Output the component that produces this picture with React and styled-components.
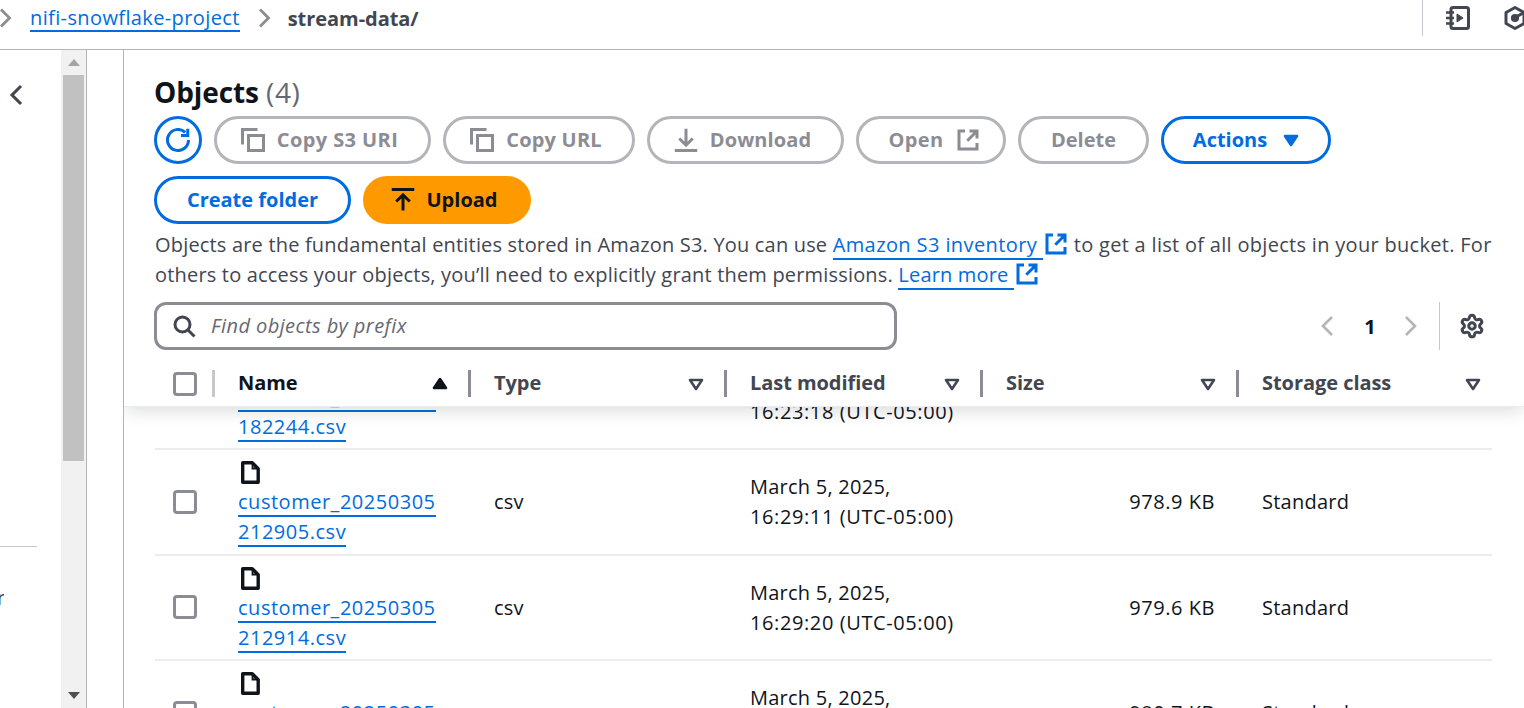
import React from "react";
import styled, { createGlobalStyle } from "styled-components";
import { Settings } from "lucide-react";

const GlobalStyle = createGlobalStyle`
  html, body {
    margin: 0;
    padding: 0;
    background: #fff;
    overflow: hidden;
  }
  * {
    box-sizing: border-box;
  }
  body {
    font-family: "Open Sans", "Noto Sans", "Liberation Sans", sans-serif;
    font-size: 20px;
    letter-spacing: 0.25px;
    color: #0f141a;
  }
`;

const Page = styled.div`
  width: 1524px;
  height: 708px;
  display: flex;
  flex-direction: column;
  overflow: hidden;
`;

const TopBar = styled.header`
  height: 50px;
  flex: none;
  display: flex;
  align-items: flex-start;
  border-bottom: 1px solid #b4b4bb;
`;

const Crumbs = styled.nav`
  flex: 1;
  height: 36px;
  display: flex;
  align-items: center;
  color: #8c8c94;
`;

const Crumb = styled.a`
  color: #006ce0;
  border-bottom: 2px solid #006ce0;
  line-height: 25px;
  letter-spacing: 0.38px;
  margin: 0 18px 0 16px;
`;

const CurrentCrumb = styled.span`
  color: #424650;
  font-weight: 700;
  letter-spacing: -0.05px;
  margin-left: 16px;
`;

const TopTools = styled.div`
  width: 102px;
  height: 36px;
  border-left: 1px solid #c6c6cd;
  display: flex;
  align-items: center;
  gap: 33px;
  padding-left: 23px;
  color: #424650;
  overflow: hidden;
`;

const Body = styled.div`
  flex: 1;
  min-height: 0;
  display: flex;
`;

const SideNav = styled.aside`
  width: 61px;
  flex: none;
  color: #424650;
  padding: 33px 0 0 9px;

  svg {
    display: block;
  }
`;

const SideRule = styled.div`
  height: 1px;
  width: 37px;
  margin: 439px 0 0 -9px;
  background: #c6c6cd;
`;

const SideStub = styled.div`
  margin: 37px 0 0 -9px;
  width: 4px;
  line-height: 27px;
  text-indent: -3px;
  color: #424650;
  overflow: hidden;
`;

const ScrollTrack = styled.div`
  width: 26px;
  flex: none;
  background: #f1f1f1;
  border-right: 1px solid #b4b4bb;
  display: flex;
  flex-direction: column;
  align-items: center;
`;

const ScrollArrow = styled.div`
  height: 25px;
  width: 100%;
  flex: none;
  display: flex;
  align-items: center;
  justify-content: center;
  color: ${(p) => (p.$muted ? "#a3a3a3" : "#505050")};
`;

const ScrollThumb = styled.div`
  width: 21px;
  height: 386px;
  flex: none;
  background: #c1c1c1;
`;

const ScrollSpace = styled.div`
  flex: 1;
`;

const Gutter = styled.div`
  width: 37px;
  flex: none;
  border-right: 1px solid #b4b4bb;
`;

const Main = styled.main`
  flex: 1;
  min-width: 0;
  display: flex;
  flex-direction: column;
`;

const Head = styled.section`
  flex: none;
  padding: 24px 39px 11px 30px;
`;

const Title = styled.h1`
  margin: 0 0 6px 0;
  font-size: 28px;
  line-height: 36px;
  font-weight: 700;
  letter-spacing: -0.1px;
`;

const Count = styled.span`
  font-weight: 400;
  letter-spacing: 0.6px;
  color: #656871;
`;

const Actions = styled.div`
  display: flex;
  flex-wrap: wrap;
  gap: 12px;
  width: 1200px;
`;

const Button = styled.button`
  height: 48px;
  width: ${(p) => p.$w}px;
  border-radius: 24px;
  border: 3px solid ${(p) => (p.$off ? "#b4b4bb" : p.$primary ? "#ff9900" : "#006ce0")};
  background: ${(p) => (p.$primary ? "#ff9900" : "#fff")};
  color: ${(p) => (p.$off ? "#8c8c94" : p.$primary ? "#0f141a" : "#006ce0")};
  font: 700 20px "Open Sans", sans-serif;
  letter-spacing: ${(p) => p.$ls ?? 0}px;
  padding: 0 ${(p) => p.$padR ?? 0}px 0 ${(p) => p.$padL ?? 0}px;
  display: flex;
  align-items: center;
  justify-content: center;
  gap: ${(p) => p.$gap ?? 12}px;
`;

const ButtonLabel = styled.span`
  margin-top: -2px;
`;

const Description = styled.p`
  margin: 6px -12px 12px 1px;
  font-size: 20px;
  line-height: 30px;
  letter-spacing: 0.18px;
  color: #424650;
`;

const DescriptionTail = styled.span`
  letter-spacing: 0.3px;
`;

const TextLink = styled.a`
  color: #006ce0;
  letter-spacing: ${(p) => p.$ls ?? 0.18}px;
  border-bottom: 2px solid #006ce0;
`;

const LinkIcon = styled.span`
  color: #006ce0;
  display: inline-block;
  vertical-align: -4px;
  margin: 0 6px 0 1px;
  line-height: 0;
`;

const FilterRow = styled.div`
  display: flex;
  align-items: center;
  justify-content: space-between;
  height: 48px;
`;

const Search = styled.div`
  width: 743px;
  height: 48px;
  border: 3px solid #8c8c94;
  border-radius: 12px;
  display: flex;
  align-items: center;
  gap: 15px;
  padding: 0 0 0 15px;
  color: #424650;
`;

const SearchText = styled.span`
  font-style: italic;
  letter-spacing: 0.42px;
  padding-bottom: 2px;
  color: #656871;
`;

const Pager = styled.div`
  display: flex;
  align-items: center;
  color: #b4b4bb;
  height: 48px;
`;

const PageNumber = styled.span`
  color: #0f141a;
  font-weight: 700;
  margin: 0 28px 0 30px;
`;

const PagerRule = styled.div`
  width: 1px;
  height: 48px;
  background: #c6c6cd;
  margin: 0 19px 0 21px;
`;

const GearWrap = styled.div`
  color: #424650;
  line-height: 0;
`;

const TableArea = styled.div`
  flex: 1;
  min-height: 0;
  display: flex;
  flex-direction: column;
  overflow: hidden;
`;

const columns = "58px 256px 256px 256px 256px 1fr";

const HeaderRow = styled.div`
  position: relative;
  z-index: 2;
  height: 46px;
  flex: none;
  background: #fff;
  box-shadow: 0 5px 18px -2px rgba(15, 20, 26, 0.16);
  border-bottom: 1px solid #ebebf0;
  padding: 0 30px;
  display: grid;
  grid-template-columns: ${columns};
  align-items: center;
`;

const HeaderCheck = styled.div`
  padding-left: 19px;
`;

const HeaderCell = styled.div`
  display: flex;
  align-items: center;
  justify-content: space-between;
  height: 27px;
  font-weight: 700;
  letter-spacing: -0.05px;
  color: ${(p) => (p.$active ? "#0f141a" : "#424650")};
  padding: 0 ${(p) => p.$pr ?? 20}px 0 23px;
  border-left: 3px solid ${(p) => (p.$active ? "#c6c6cd" : "#8c8c94")};
`;

const HeaderLabel = styled.span`
  margin-top: -2px;
`;

const Rows = styled.div`
  flex: 1;
  min-height: 0;
  margin: 0 32px 0 30px;
`;

const Row = styled.div`
  display: grid;
  grid-template-columns: ${columns};
  height: 105.5px;
  margin-top: ${(p) => p.$shift ?? 0}px;
  margin-left: 1px;
  border-bottom: 2px solid #ebebf0;
  align-items: center;
  line-height: 30px;
`;

const CheckCell = styled.div`
  padding-left: 18px;
`;

const Check = styled.span`
  display: block;
  width: 24px;
  height: 24px;
  border: 3px solid #8c8c94;
  border-radius: 4px;
  background: #fff;
`;

const NameCell = styled.div`
  align-self: start;
  padding: 11px 0 0 25px;
`;

const FileGlyph = styled.div`
  height: 26px;
  line-height: 0;
  padding-left: 3px;
`;

const FileLink = styled.a`
  color: #006ce0;
  letter-spacing: 0.52px;
  border-bottom: 2px solid #006ce0;
`;

const TextCell = styled.div`
  padding: 1px 0 0 25px;
`;

const TimeText = styled.span`
  letter-spacing: 0.6px;
`;

const SizeCell = styled.div`
  text-align: right;
  letter-spacing: 0.55px;
  padding: 1px 22px 0 0;
`;

const Icon = ({ size = 24, width = 2, children }) => (
  <svg
    width={size}
    height={size}
    viewBox="0 0 16 16"
    fill="none"
    stroke="currentColor"
    strokeWidth={width}
    style={{ flex: "none" }}
  >
    {children}
  </svg>
);

const CopyIcon = () => (
  <Icon>
    <path d="M1 11V1h10" />
    <path d="M5 5h10v10H5z" />
  </Icon>
);

const ExternalIcon = () => (
  <Icon>
    <path d="M6 2H2v12h12v-4" />
    <path d="M9 2h5v5M14 2 7.5 8.5" />
  </Icon>
);

const Caret = ({ up, solid }) => (
  <svg width="16" height="14" viewBox="0 0 16 14" style={{ flex: "none" }}>
    <path
      d={up ? "M8 2 14 11H2z" : "M8 12 2 3h12z"}
      fill={solid ? "currentColor" : "none"}
      stroke="currentColor"
      strokeWidth="2.6"
      strokeLinejoin="round"
    />
  </svg>
);

const FileIcon = () => (
  <svg width="19" height="23" viewBox="0 0 19 23" fill="none" stroke="#0f141a" strokeWidth="3.4">
    <path d="M1.7 1.7h9.5l6 6v13.6H1.7z" strokeLinejoin="round" />
    <path d="M11.5 2v5.5H17" strokeWidth="1.8" />
  </svg>
);

const header = [
  { label: "Name", active: true, up: true },
  { label: "Type" },
  { label: "Last modified" },
  { label: "Size" },
  { label: "Storage class", pr: 13 },
];

const files = [
  { top: "customer_20250305", bottom: "182244.csv", date: "March 5, 2025,", time: "16:23:18 (UTC-05:00)", size: "978.1 KB", shift: -62.5, clipped: true },
  { top: "customer_20250305", bottom: "212905.csv", date: "March 5, 2025,", time: "16:29:11 (UTC-05:00)", size: "978.9 KB" },
  { top: "customer_20250305", bottom: "212914.csv", date: "March 5, 2025,", time: "16:29:20 (UTC-05:00)", size: "979.6 KB" },
  { top: "customer_20250305", bottom: "212923.csv", date: "March 5, 2025,", time: "16:29:29 (UTC-05:00)", size: "980.7 KB" },
];

export default function App() {
  return (
    <Page>
      <GlobalStyle />
      <TopBar>
        <Crumbs>
          <svg width="14" height="22" viewBox="0 0 14 22" fill="none" stroke="currentColor" strokeWidth="2.8">
            <path d="M1 2.5l8.5 8.5L1 19.5" />
          </svg>
          <Crumb>nifi-snowflake-project</Crumb>
          <svg width="14" height="22" viewBox="0 0 14 22" fill="none" stroke="currentColor" strokeWidth="2.8">
            <path d="M2 2.5l8.5 8.5L2 19.5" />
          </svg>
          <CurrentCrumb>stream-data/</CurrentCrumb>
        </Crumbs>
        <TopTools>
          <svg width="24" height="24" viewBox="0 0 24 24" fill="none" stroke="currentColor" strokeWidth="3" style={{ flex: "none" }}>
            <rect x="5" y="1.5" width="17.5" height="21" rx="2" />
            <path d="M0 6.5h8M0 12h8M0 17.5h8" strokeWidth="2.4" />
            <path d="M11 8v8l6-4z" fill="currentColor" strokeWidth="1" />
          </svg>
          <svg width="24" height="24" viewBox="0 0 24 24" fill="none" stroke="currentColor" strokeWidth="3" style={{ flex: "none" }}>
            <path d="M12 1.5 21 6.5v11l-9 5-9-5v-11z" strokeLinejoin="round" />
            <circle cx="12" cy="12" r="2.6" fill="currentColor" />
            <path d="M13 11l9-5" />
          </svg>
        </TopTools>
      </TopBar>
      <Body>
        <SideNav>
          <svg width="14" height="24" viewBox="0 0 14 24" fill="none" stroke="currentColor" strokeWidth="3">
            <path d="M12 3 3 12l9 9" />
          </svg>
          <SideRule />
          <SideStub>r</SideStub>
        </SideNav>
        <ScrollTrack>
          <ScrollArrow $muted>
            <svg width="12" height="7" viewBox="0 0 12 7"><path d="M6 0l6 7H0z" fill="currentColor" /></svg>
          </ScrollArrow>
          <ScrollThumb />
          <ScrollSpace />
          <ScrollArrow>
            <svg width="12" height="7" viewBox="0 0 12 7"><path d="M6 7 0 0h12z" fill="currentColor" /></svg>
          </ScrollArrow>
        </ScrollTrack>
        <Gutter />
        <Main>
          <Head>
            <Title>
              Objects <Count>(4)</Count>
            </Title>
            <Actions>
              <Button $w={48}>
                <Icon>
                  <path d="M15 8a7 7 0 1 1-2.2-5.1" />
                  <path d="M14.5 0.5V5H10" />
                </Icon>
              </Button>
              <Button $w={217} $off $padR={6} $ls={0.4}>
                <CopyIcon />
                <ButtonLabel>Copy S3 URI</ButtonLabel>
              </Button>
              <Button $w={192} $off $padR={6} $ls={0.2}>
                <CopyIcon />
                <ButtonLabel>Copy URL</ButtonLabel>
              </Button>
              <Button $w={197} $off $padR={6} $ls={0.1}>
                <Icon>
                  <path d="M0.5 15h15" />
                  <path d="M3.5 7 8 11.5 12.5 7M8 0.5v11" />
                </Icon>
                <ButtonLabel>Download</ButtonLabel>
              </Button>
              <Button $w={150} $off $padL={6} $ls={0.4}>
                <ButtonLabel>Open</ButtonLabel>
                <ExternalIcon />
              </Button>
              <Button $w={131} $off>
                <ButtonLabel>Delete</ButtonLabel>
              </Button>
              <Button $w={170} $gap={16}>
                <ButtonLabel>Actions</ButtonLabel>
                <Caret solid />
              </Button>
              <Button $w={197}>
                <ButtonLabel>Create folder</ButtonLabel>
              </Button>
              <Button $w={168} $primary $padR={6}>
                <Icon>
                  <path d="M0.5 1h15" />
                  <path d="M3.5 9 8 4.5 12.5 9M8 15V4.5" />
                </Icon>
                <ButtonLabel>Upload</ButtonLabel>
              </Button>
            </Actions>
            <Description>
              Objects are the fundamental entities stored in Amazon S3. You can use{" "}
              <TextLink $ls={0.4}>Amazon S3 inventory&nbsp;</TextLink>
              <LinkIcon>
                <ExternalIcon />
              </LinkIcon>
              <DescriptionTail>to get a list of all objects in your bucket. For</DescriptionTail>{" "}
              others to access your objects, you’ll need to explicitly grant them permissions.{" "}
              <TextLink>Learn more&nbsp;</TextLink>
              <LinkIcon>
                <ExternalIcon />
              </LinkIcon>
            </Description>
            <FilterRow>
              <Search>
                <Icon>
                  <circle cx="7" cy="7" r="5" />
                  <path d="m15 15-4.5-4.5" />
                </Icon>
                <SearchText>Find objects by prefix</SearchText>
              </Search>
              <Pager>
                <svg width="14" height="24" viewBox="0 0 14 24" fill="none" stroke="currentColor" strokeWidth="2.6">
                  <path d="M12 3 3 12l9 9" />
                </svg>
                <PageNumber>1</PageNumber>
                <svg width="14" height="24" viewBox="0 0 14 24" fill="none" stroke="currentColor" strokeWidth="2.6">
                  <path d="M2 3l9 9-9 9" />
                </svg>
                <PagerRule />
                <GearWrap>
                  <Settings size={26} strokeWidth={2.8} />
                </GearWrap>
              </Pager>
            </FilterRow>
          </Head>
          <TableArea>
            <HeaderRow>
              <HeaderCheck>
                <Check />
              </HeaderCheck>
              {header.map((h) => (
                <HeaderCell key={h.label} $active={h.active} $pr={h.pr}>
                  <HeaderLabel>{h.label}</HeaderLabel>
                  <Caret up={h.up} solid={h.up} />
                </HeaderCell>
              ))}
            </HeaderRow>
            <Rows>
              {files.map((f) => (
                <Row key={f.bottom} $shift={f.shift}>
                  <CheckCell>{!f.clipped && <Check />}</CheckCell>
                  <NameCell>
                    <FileGlyph>
                      <FileIcon />
                    </FileGlyph>
                    <FileLink>{f.top}</FileLink>
                    <br />
                    <FileLink>{f.bottom}</FileLink>
                  </NameCell>
                  <TextCell>csv</TextCell>
                  <TextCell>
                    {f.date}
                    <br />
                    <TimeText>{f.time}</TimeText>
                  </TextCell>
                  <SizeCell>{f.size}</SizeCell>
                  <TextCell>Standard</TextCell>
                </Row>
              ))}
            </Rows>
          </TableArea>
        </Main>
      </Body>
    </Page>
  );
}
